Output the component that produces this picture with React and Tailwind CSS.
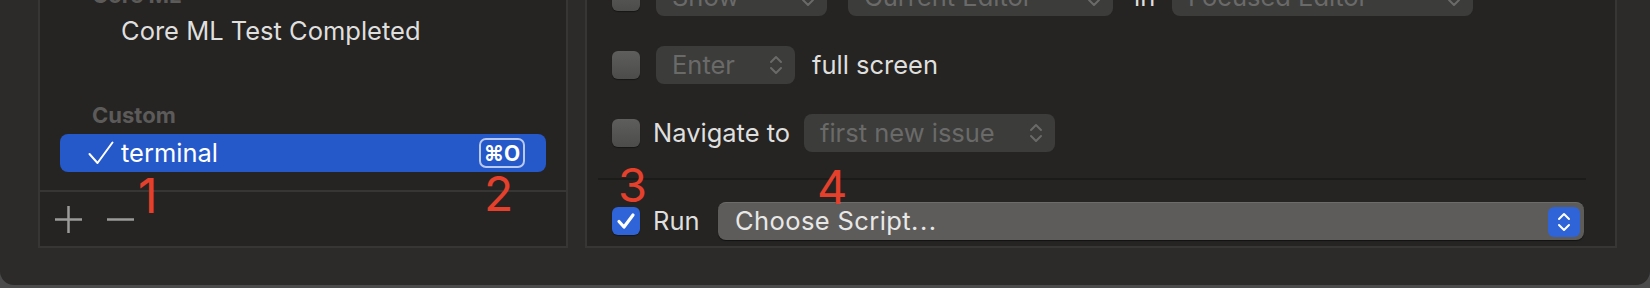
import React from "react";

function UpDown({ className = "" }) {
  return (
    <svg width="14" height="22" viewBox="0 0 14 22" fill="none" stroke="currentColor" strokeWidth="2" strokeLinecap="round" strokeLinejoin="round" className={className}>
      <path d="M2 8 L7 3 L12 8" />
      <path d="M2 14 L7 19 L12 14" />
    </svg>
  );
}

function Checkbox() {
  return <div className="w-[28px] h-[28px] shrink-0 rounded-[6px] bg-linear-to-b from-[#5e5e5d] to-[#4c4c4b] shadow-[0_1px_1px_rgba(0,0,0,0.4)]" />;
}

function Popup({ w, label }) {
  return (
    <div className={`${w} h-[38px] shrink-0 rounded-[8px] bg-[#3c3c3b] flex items-center justify-between pl-[16px] pr-[12px] text-[#6a6a69] text-[25.5px]`}>
      <span className="whitespace-nowrap">{label}</span>
      <UpDown />
    </div>
  );
}

function LeftPanel() {
  return (
    <div className="relative w-[530px] h-[301px] shrink-0 border-2 border-[#373635] bg-[#252423] flex flex-col">
      <div className="pt-[30px] flex flex-col flex-1">
        <div className="h-[32px] flex items-center pl-[52px] text-[22px] font-bold text-[#5c5b5a]">Core ML</div>
        <div className="h-[38px] flex items-center pt-[2px] pl-[81px] text-[25.5px] text-[#dfdfde]">Core ML Test Completed</div>
        <div className="h-[50px]" />
        <div className="h-[32px] flex items-center pl-[52px] text-[22px] font-bold text-[#5c5b5a]">Custom</div>
        <div className="mt-[3px] mx-[20px] h-[38px] rounded-[8px] bg-[#2558c9] flex items-center pl-[28px] pr-[21px]">
          <svg width="26" height="24" viewBox="0 0 26 24" fill="none" stroke="#ffffff" strokeWidth="2" strokeLinecap="round" strokeLinejoin="round">
            <path d="M1.5 13 L9.5 22 L24.5 1.5" />
          </svg>
          <span className="ml-[7px] text-[25.5px] text-white">terminal</span>
          <div className="ml-auto h-[30px] w-[46px] rounded-[7px] border-2 border-[#b8c8ee] flex items-center justify-center text-[21px] font-bold text-white leading-none">⌘O</div>
        </div>
        <div className="flex-1" />
        <div className="h-[56px] border-t-2 border-[#373635] flex items-center pl-[15px] gap-[25px]">
          <svg width="27" height="27" viewBox="0 0 27 27" stroke="#9b9b9a" strokeWidth="2.5">
            <path d="M13.5 0 V27 M0 13.5 H27" />
          </svg>
          <svg width="27" height="27" viewBox="0 0 27 27" stroke="#9b9b9a" strokeWidth="2.5">
            <path d="M0 13.5 H27" />
          </svg>
        </div>
      </div>
      <div className="absolute left-[98px] top-[223px] text-[48px] leading-none text-[#e5402b]">1</div>
      <div className="absolute left-[444px] top-[221px] text-[48px] leading-none text-[#e5402b]">2</div>
    </div>
  );
}

function RightPanel() {
  return (
    <div className="relative w-[1032px] h-[301px] shrink-0 border-2 border-[#373635] bg-[#252423] flex flex-col pt-[29px] pl-[25px] text-[25.5px]">
      <div className="h-[38px] flex items-center">
        <Checkbox />
        <div className="ml-[16px]"><Popup w="w-[171px]" label="Show" /></div>
        <div className="ml-[21px]"><Popup w="w-[265px]" label="Current Editor" /></div>
        <span className="ml-[21px] w-[19px] text-[#dfdfde]">in</span>
        <div className="ml-[19px]"><Popup w="w-[301px]" label="Focused Editor" /></div>
      </div>
      <div className="mt-[30px] h-[38px] flex items-center">
        <Checkbox />
        <div className="ml-[16px]"><Popup w="w-[139px]" label="Enter" /></div>
        <span className="ml-[17px] text-[#dfdfde] whitespace-nowrap">full screen</span>
      </div>
      <div className="mt-[30px] h-[38px] flex items-center">
        <Checkbox />
        <span className="ml-[13px] w-[135px] text-[#dfdfde] whitespace-nowrap">Navigate to</span>
        <div className="ml-[16px]"><Popup w="w-[251px]" label="first new issue" /></div>
      </div>
      <div className="mt-[26px] h-[2px] -ml-[14px] mr-[29px] bg-[#1b1b1a]" />
      <div className="mt-[22px] h-[38px] flex items-center mr-[31px]">
        <div className="w-[28px] h-[28px] shrink-0 rounded-[6px] bg-[#2f64d8] flex items-center justify-center shadow-[0_1px_1px_rgba(0,0,0,0.4)]">
          <svg width="20" height="18" viewBox="0 0 20 18" fill="none" stroke="#ffffff" strokeWidth="3.2" strokeLinecap="round" strokeLinejoin="round">
            <path d="M3 9.5 L8 15 L17 3" />
          </svg>
        </div>
        <span className="ml-[13px] w-[44px] text-[#dfdfde]">Run</span>
        <div className="ml-[21px] flex-1 h-[38px] rounded-[8px] bg-[#5d5c5b] border-t border-[#6d6c6b] shadow-[0_1px_1px_rgba(0,0,0,0.5)] flex items-center pl-[17px] pr-[4px]">
          <span className="text-[#e8e8e7] whitespace-nowrap tracking-[0.4px]">Choose Script<span className="tracking-[1.5px]">...</span></span>
          <div className="ml-auto w-[32px] h-[30px] rounded-[6px] bg-[#2f64d8] flex items-center justify-center text-white">
            <UpDown />
          </div>
        </div>
      </div>
      <div className="absolute left-[31px] top-[212px] text-[47px] leading-none text-[#e5402b]">3</div>
      <div className="absolute left-[230px] top-[214px] text-[47px] leading-none text-[#e5402b]">4</div>
    </div>
  );
}

export default function App() {
  return (
    <div className="w-[1650px] h-[288px] bg-[#4b4b4b] overflow-hidden font-[Inter,'DejaVu_Sans',sans-serif]">
      <div className="h-[285px] bg-[#2c2b2a] rounded-b-[14px] overflow-hidden">
        <div className="flex gap-[17px] pl-[38px] -mt-[53px]">
          <LeftPanel />
          <RightPanel />
        </div>
      </div>
    </div>
  );
}
